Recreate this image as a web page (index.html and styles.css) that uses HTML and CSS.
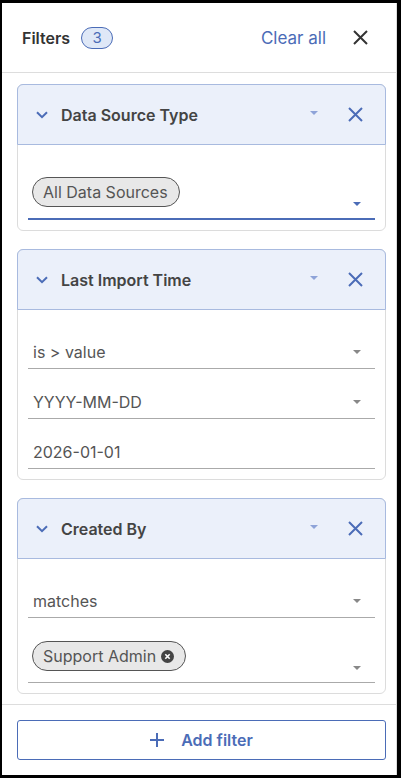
FILE: index.html
```html
<!DOCTYPE html>
<html lang="en">
<head>
    <meta charset="UTF-8">
    <meta name="viewport" content="width=device-width, initial-scale=1.0">
    <title>Filters</title>
    <link rel="stylesheet" href="styles.css">
</head>
<body>
    <div class="panel">
        <div class="panel-header">
            <span class="title">Filters</span>
            <span class="count">3</span>
            <span class="spacer"></span>
            <a class="clear-all" href="#">Clear all</a>
            <svg class="close" width="15" height="15" viewBox="0 0 15 15">
                <path d="M1 1 L14 14 M14 1 L1 14" stroke="#333" stroke-width="2" fill="none"/>
            </svg>
        </div>

        <div class="filter-list">
            <!-- Data source type -->
            <div class="card">
                <div class="card-header">
                    <svg class="chevron" width="12" height="8" viewBox="0 0 12 8">
                        <path d="M1 1.2 L6 6.2 L11 1.2" stroke="#4b6cb7" stroke-width="2" fill="none"/>
                    </svg>
                    <span class="card-title">Data Source Type</span>
                    <span class="caret light"></span>
                    <svg class="remove" width="15" height="15" viewBox="0 0 15 15">
                        <path d="M1 1 L14 14 M14 1 L1 14" stroke="#4b6cb7" stroke-width="2" fill="none"/>
                    </svg>
                </div>
                <div class="card-body">
                    <div class="field chips active">
                        <span class="chip">All Data Sources</span>
                        <span class="caret blue"></span>
                    </div>
                </div>
            </div>

            <!-- Last import time -->
            <div class="card">
                <div class="card-header">
                    <svg class="chevron" width="12" height="8" viewBox="0 0 12 8">
                        <path d="M1 1.2 L6 6.2 L11 1.2" stroke="#4b6cb7" stroke-width="2" fill="none"/>
                    </svg>
                    <span class="card-title">Last Import Time</span>
                    <span class="caret light"></span>
                    <svg class="remove" width="15" height="15" viewBox="0 0 15 15">
                        <path d="M1 1 L14 14 M14 1 L1 14" stroke="#4b6cb7" stroke-width="2" fill="none"/>
                    </svg>
                </div>
                <div class="card-body">
                    <div class="field">
                        <span class="value">is &gt; value</span>
                        <span class="caret"></span>
                    </div>
                    <div class="field">
                        <span class="value">YYYY-MM-DD</span>
                        <span class="caret"></span>
                    </div>
                    <div class="field">
                        <span class="value">2026-01-01</span>
                    </div>
                </div>
            </div>

            <!-- Created by -->
            <div class="card">
                <div class="card-header">
                    <svg class="chevron" width="12" height="8" viewBox="0 0 12 8">
                        <path d="M1 1.2 L6 6.2 L11 1.2" stroke="#4b6cb7" stroke-width="2" fill="none"/>
                    </svg>
                    <span class="card-title">Created By</span>
                    <span class="caret light"></span>
                    <svg class="remove" width="15" height="15" viewBox="0 0 15 15">
                        <path d="M1 1 L14 14 M14 1 L1 14" stroke="#4b6cb7" stroke-width="2" fill="none"/>
                    </svg>
                </div>
                <div class="card-body">
                    <div class="field">
                        <span class="value">matches</span>
                        <span class="caret"></span>
                    </div>
                    <div class="field chips">
                        <span class="chip">Support Admin
                            <svg class="chip-x" width="13" height="13" viewBox="0 0 13 13">
                                <circle cx="6.5" cy="6.5" r="6.5" fill="#444"/>
                                <path d="M4.3 4.3 L8.7 8.7 M8.7 4.3 L4.3 8.7" stroke="#fff" stroke-width="1.6"/>
                            </svg>
                        </span>
                        <span class="caret"></span>
                    </div>
                </div>
            </div>
        </div>

        <div class="panel-footer">
            <button class="add-filter" type="button">
                <svg width="14" height="14" viewBox="0 0 14 14">
                    <path d="M7 0 V14 M0 7 H14" stroke="#4b6cb7" stroke-width="2"/>
                </svg>
                <span>Add filter</span>
            </button>
        </div>
    </div>
</body>
</html>
```

FILE: styles.css
```css
html, body {
    margin: 0;
    height: 100%;
}
body {
    background-color: #000;
    font-family: "Inter", "Noto Sans", sans-serif;
    color: #444;
}
.panel {
    box-sizing: border-box;
    height: 772px;
    margin: 3px 4px 0 2px;
    background-color: #fff;
    border-right: 1px solid #ddd;
    display: flex;
    flex-direction: column;
}
.panel-header {
    height: 70px;
    box-sizing: border-box;
    padding: 0 28px 0 20px;
    border-bottom: 1px solid #ddd;
    display: flex;
    align-items: center;
}
.title {
    font-size: 16px;
    font-weight: 600;
    color: #333;
}
.count {
    margin-left: 11px;
    box-sizing: border-box;
    width: 32px;
    height: 22px;
    border: 1px solid #4b6cb7;
    border-radius: 11px;
    background-color: #dfe8f7;
    color: #4b6cb7;
    font-size: 15px;
    display: flex;
    align-items: center;
    justify-content: center;
}
.spacer {
    flex: 1;
}
.clear-all {
    color: #4b6cb7;
    font-size: 17px;
    text-decoration: none;
    margin-right: 27px;
}
.filter-list {
    flex: 1;
    overflow: hidden;
    padding: 11px 10px 0 15px;
}
.card {
    border: 1px solid #dcdcdc;
    border-radius: 6px;
    margin-bottom: 18px;
}
.card-header {
    height: 61px;
    box-sizing: border-box;
    background-color: #ebf0fa;
    border: 1px solid #a8badf;
    border-radius: 6px 6px 0 0;
    margin: -1px -1px 0 -1px;
    padding: 0 22px 0 18px;
    display: flex;
    align-items: center;
}
.chevron {
    margin-right: 13px;
}
.card-title {
    flex: 1;
    font-size: 16px;
    font-weight: 600;
    color: #444;
}
.caret {
    width: 0;
    height: 0;
    border-left: 4.5px solid transparent;
    border-right: 4.5px solid transparent;
    border-top: 4.5px solid #888;
}
.caret.light {
    border-top-color: #8ea3d8;
    margin-right: 30px;
    margin-top: -3px;
}
.caret.blue {
    border-top-color: #4b6cb7;
}
.card-body {
    padding: 26px 10px 10px 10px;
}
.field {
    height: 32px;
    padding: 0 14px 0 5px;
    border-bottom: 1px solid #aaa;
    margin-bottom: 17px;
    display: flex;
    align-items: center;
    justify-content: space-between;
    font-size: 16px;
    color: #555;
}
.field:last-child {
    margin-bottom: 0;
}
.field.chips {
    height: 41px;
    padding-top: 6px;
    align-items: flex-start;
}
.field.chips .caret {
    margin-top: 25px;
}
.field.active {
    border-bottom: 2px solid #4b6cb7;
}
.chip {
    box-sizing: border-box;
    height: 30px;
    padding: 0 11px 0 10px;
    border: 1px solid #555;
    border-radius: 15px;
    background-color: #e8e8e8;
    display: inline-flex;
    align-items: center;
    gap: 5px;
    margin-left: -1px;
}
.panel-footer {
    border-top: 1px solid #ddd;
    padding: 15px 10px 15px 15px;
}
.add-filter {
    width: 100%;
    height: 40px;
    border: 1px solid #4b6cb7;
    border-radius: 3px;
    background-color: #fff;
    color: #4b6cb7;
    font-family: "Inter", "Noto Sans", sans-serif;
    font-size: 16px;
    font-weight: 600;
    display: flex;
    align-items: center;
    justify-content: center;
    gap: 17px;
}
```
